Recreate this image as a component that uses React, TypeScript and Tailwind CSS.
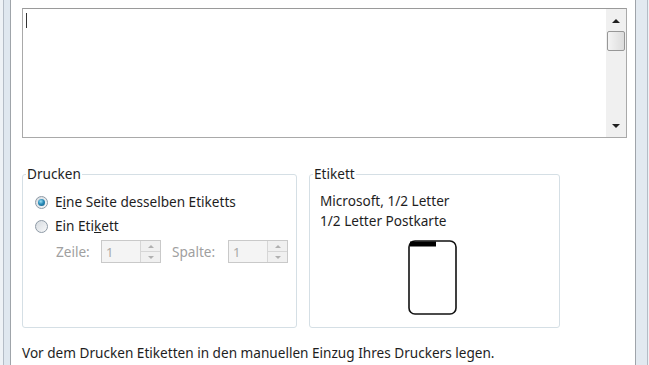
import React from 'react';

const font = { fontFamily: '"Noto Sans", "Open Sans", sans-serif' };

const Radio: React.FC<{ checked?: boolean }> = ({ checked }) => (
  <span className="relative flex h-[13px] w-[13px] shrink-0 items-center justify-center rounded-full border border-[#8e9aa6] bg-gradient-to-br from-[#d6dbe0] to-[#f7f8f9]">
    {checked && (
      <span className="h-[7px] w-[7px] rounded-full bg-[radial-gradient(circle_at_40%_35%,#9be0f5_0%,#2a8bb8_45%,#125a82_100%)]" />
    )}
  </span>
);

const Spinner: React.FC = () => (
  <div className="flex h-[23px] w-[60px] border border-[#c9c9c9] bg-[#f4f4f4]">
    <div className="flex flex-1 items-center pl-[4px] text-[13px] text-[#a8a8a8]">1</div>
    <div className="flex w-[20px] flex-col border-l border-[#d6d6d6]">
      <div className="flex flex-1 items-center justify-center border-b border-[#d6d6d6] bg-[#f0f0f0]">
        <span className="h-0 w-0 border-x-[3px] border-b-[3px] border-x-transparent border-b-[#b0b0b0]" />
      </div>
      <div className="flex flex-1 items-center justify-center bg-[#f0f0f0]">
        <span className="h-0 w-0 border-x-[3px] border-t-[3px] border-x-transparent border-t-[#b0b0b0]" />
      </div>
    </div>
  </div>
);

const Group: React.FC<{ title: string; width: string; children: React.ReactNode }> = ({ title, width, children }) => (
  <div className={`relative h-[154px] rounded-[3px] border border-[#d5dfe5] ${width}`}>
    <span className="absolute -top-[10px] left-[3px] bg-white px-[1px] text-[13.6px] leading-[18px] text-[#1e1e1e]">
      {title}
    </span>
    {children}
  </div>
);

export default function App() {
  return (
    <div className="flex h-[365px] w-[649px] overflow-hidden bg-white" style={font}>
      {/* left window frame */}
      <div className="flex w-[11px] shrink-0">
        <div className="w-[3px] bg-[#eef2f6]" />
        <div className="w-[1px] bg-[#b4bcc6]" />
        <div className="w-[6px] bg-[#dfe7ef]" />
        <div className="w-[1px] bg-[#9fa4aa]" />
      </div>

      <div className="flex w-[624px] flex-col pl-[11px] pt-[8px]">
        {/* text area */}
        <div className="flex h-[130px] w-[605px] border border-[#a9a9a9] border-t-[#9a9a9a] bg-white">
          <div className="flex-1 pl-[3px] pt-[4px]">
            <div className="h-[15px] w-[1px] bg-[#333]" />
          </div>
          <div className="flex w-[20px] flex-col bg-[#f0f0f0]">
            <div className="flex h-[17px] items-end justify-center pb-[3px]">
              <span className="h-0 w-0 border-x-[4px] border-b-[4px] border-x-transparent border-b-[#202020]" />
            </div>
            <div className="mx-[1px] mt-[5px] h-[20px] rounded-[2px] border border-[#979797] bg-gradient-to-r from-[#f4f4f4] to-[#dcdcdc]" />
            <div className="flex-1" />
            <div className="flex h-[17px] items-start justify-center pt-[4px]">
              <span className="h-0 w-0 border-x-[4px] border-t-[4px] border-x-transparent border-t-[#202020]" />
            </div>
          </div>
        </div>

        {/* groups */}
        <div className="mt-[36px] flex gap-[12px]">
          <Group title="Drucken" width="w-[275px]">
            <div className="flex flex-col pl-[12px] pt-[18px] text-[13.6px] leading-[18px] text-[#1e1e1e]">
              <label className="flex items-center gap-[7px]">
                <Radio checked />
                <span>
                  E<span className="underline">i</span>ne Seite desselben Etiketts
                </span>
              </label>
              <label className="mt-[6px] flex items-center gap-[7px]">
                <Radio />
                <span>
                  Ein Eti<span className="underline">k</span>ett
                </span>
              </label>
              <div className="mt-[5px] flex items-center pl-[21px] text-[#a0a0a0]">
                <span className="w-[45px]">Zeile:</span>
                <Spinner />
                <span className="ml-[11px] w-[56px]">Spalte:</span>
                <Spinner />
              </div>
            </div>
          </Group>
          <Group title="Etikett" width="w-[251px]">
            <div className="flex flex-col pl-[10px] pt-[16px] text-[13.6px] leading-[20px] text-[#1e1e1e]">
              <span>Microsoft, 1/2 Letter</span>
              <span>1/2 Letter Postkarte</span>
              <div className="mt-[9px] flex justify-center pr-[14px]">
                <svg width="49" height="75" viewBox="0 0 49 75">
                  <rect x="1" y="1" width="47" height="73" rx="6" fill="white" stroke="#111" strokeWidth="1.6" />
                  <rect x="2" y="1.5" width="26" height="5" fill="#000" />
                </svg>
              </div>
            </div>
          </Group>
        </div>

        <p className="mt-[16px] text-[13.6px] leading-[18px] text-[#1e1e1e]">
          Vor dem Drucken Etiketten in den manuellen Einzug Ihres Druckers legen.
        </p>
      </div>

      {/* right window frame */}
      <div className="flex w-[14px] shrink-0">
        <div className="w-[1px] bg-[#9fa4aa]" />
        <div className="w-[11px] bg-[#e2e9f0]" />
        <div className="w-[1px] bg-[#b4bcc6]" />
        <div className="w-[1px] bg-[#eef2f6]" />
      </div>
    </div>
  );
}
